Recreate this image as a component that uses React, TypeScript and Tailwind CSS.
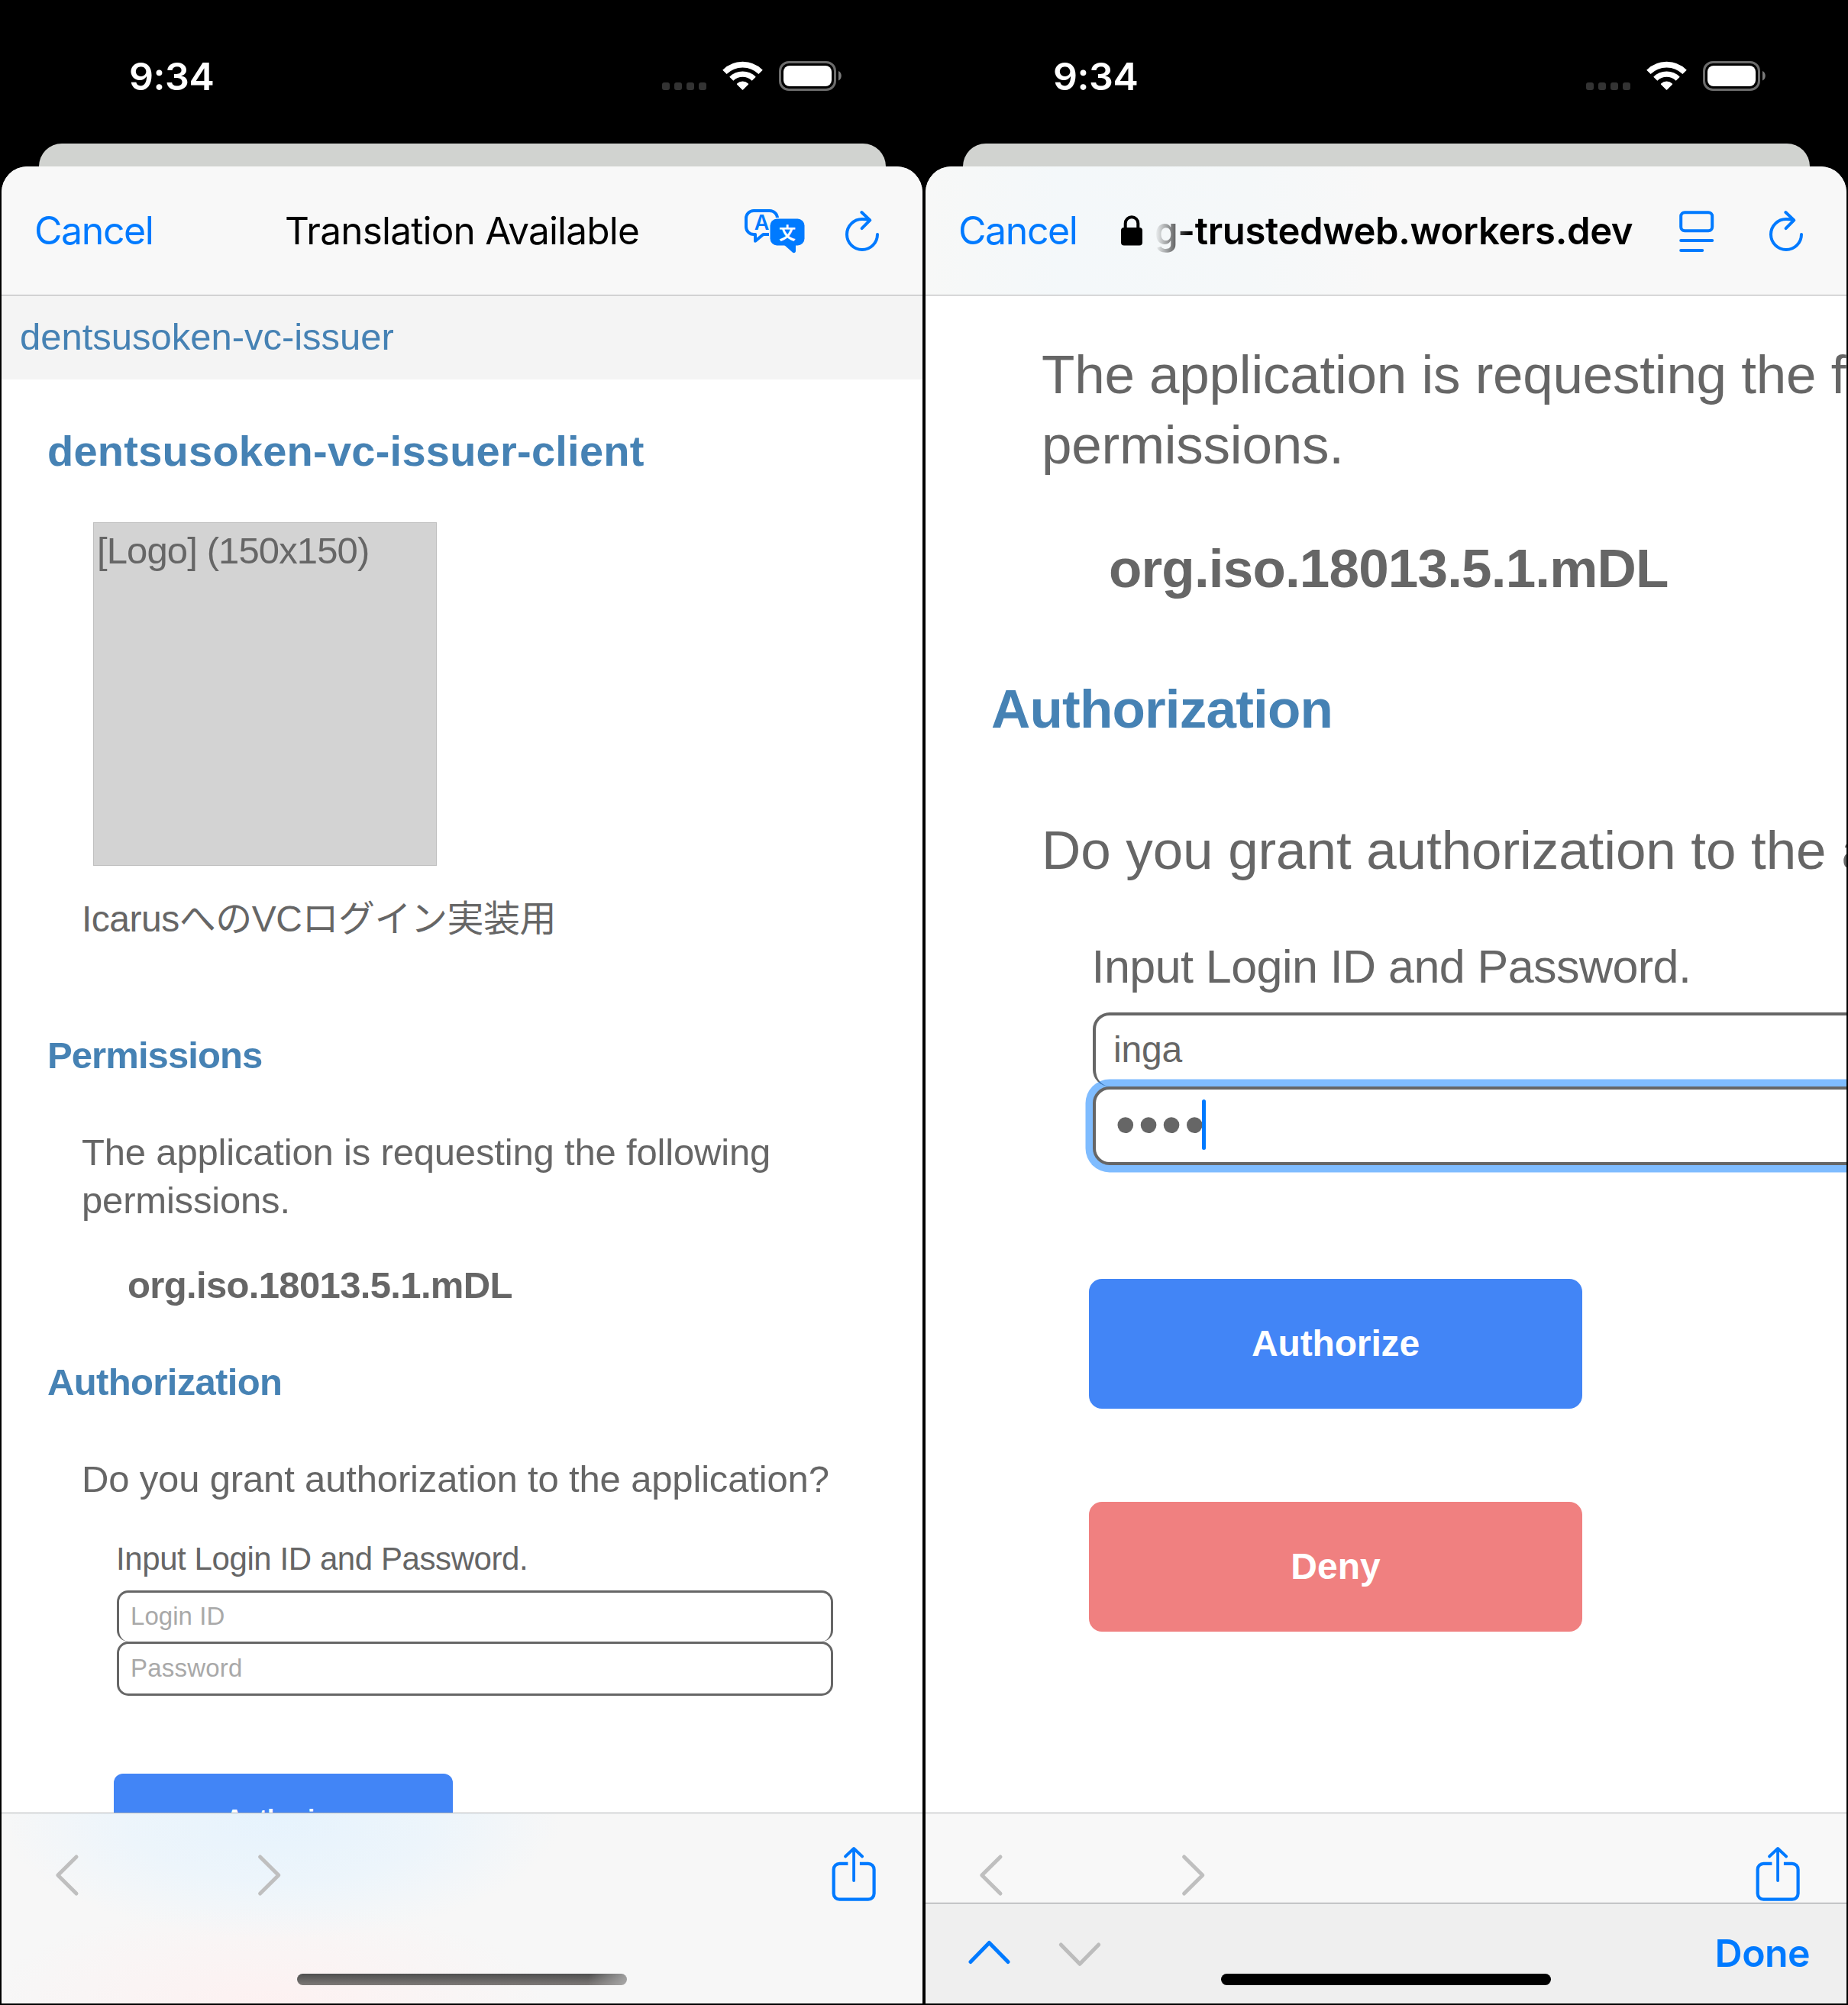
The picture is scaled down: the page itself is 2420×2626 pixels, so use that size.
import type { ReactNode } from "react";

function StatusBar() {
  return (
    <div className="flex h-[188px] shrink-0 items-start pt-[70px] pr-[104px] pl-[167px] font-[Inter,sans-serif] text-white">
      <span className="text-[50px] leading-[60px] font-semibold tracking-[-0.41px]">9:34</span>
      <div className="ml-auto flex items-start">
        <div className="mt-[38px] flex gap-[6px]">
          <span className="size-[10px] rounded-[3px] bg-[#333]" />
          <span className="size-[10px] rounded-[3px] bg-[#333]" />
          <span className="size-[10px] rounded-[3px] bg-[#333]" />
          <span className="size-[10px] rounded-[3px] bg-[#333]" />
        </div>
        <svg className="mt-[10px] ml-[21px]" width="53" height="40" viewBox="0 0 53 40" fill="none">
          <path d="M2.9 14.4a33.4 33.4 0 0 1 47.2 0" stroke="#fff" strokeWidth="7.6" />
          <path d="M11.8 23.3a20.8 20.8 0 0 1 29.4 0" stroke="#fff" strokeWidth="7.2" />
          <path
            d="M26.5 37l-6.8-6.9a9.6 9.6 0 0 1 13.6 0z"
            fill="#fff"
            stroke="#fff"
            strokeWidth="1.6"
            strokeLinejoin="round"
          />
        </svg>
        <svg className="mt-[10px] ml-[21px]" width="84" height="40" viewBox="0 0 84 40" fill="none">
          <rect x="1.5" y="1.5" width="72" height="36" rx="11.5" stroke="#6c6c6c" strokeWidth="3" />
          <rect x="6" y="6" width="63" height="27" rx="8" fill="#fff" />
          <path d="M78 13c5 2 5 10.500 0 12.500z" fill="#7a7a7a" />
        </svg>
      </div>
    </div>
  );
}

function ReloadIcon() {
  return (
    <svg width="48" height="60" viewBox="0 0 48 60" fill="none" stroke="#007aff" strokeWidth="4">
      <path d="M44 35a20 20 0 1 1-20-20c3 0 6 .3 9 1" strokeLinecap="round" />
      <path d="M23.300 6l11 10.400-10.700 10.700" strokeLinecap="round" strokeLinejoin="round" />
    </svg>
  );
}

function TranslateIcon() {
  return (
    <svg className="mr-[51px]" width="80" height="60" viewBox="974 272 80 60" fill="none">
      <path
        d="M1018 292v-6a10 10 0 0 0-10-10h-21a10 10 0 0 0-10 10v11a10 10 0 0 0 10 10h2v8.800l10.500-8.800h18"
        stroke="#007aff"
        strokeWidth="4"
        strokeLinejoin="round"
      />
      <text
        x="997.5"
        y="301"
        textAnchor="middle"
        className="fill-[#007aff] font-[Inter,sans-serif] text-[27px] font-semibold"
      >
        A
      </text>
      <rect x="1007" y="285" width="48" height="38" rx="10" fill="#f7f7f7" />
      <rect x="1008.500" y="286.500" width="45" height="35" rx="9" fill="#007aff" />
      <path d="M1026 320l11.500 10.300c2 1.600 4.500.8 4.500-1.600V320z" fill="#007aff" />
      <text
        x="1031"
        y="312.500"
        textAnchor="middle"
        className="fill-white font-['Noto_Sans_CJK_JP',sans-serif] text-[22px] font-bold"
      >
        文
      </text>
    </svg>
  );
}

function ReaderIcon() {
  return (
    <svg
      className="mr-[70px]"
      width="47"
      height="60"
      viewBox="0 0 47 60"
      fill="none"
      stroke="#007aff"
      strokeWidth="4"
      strokeLinecap="round"
    >
      <rect x="3.200" y="6.300" width="41" height="24" rx="5" />
      <path d="M3.200 43h41M3.200 56h28" />
    </svg>
  );
}

function LockIcon() {
  return (
    <svg width="28" height="40" viewBox="0 0 28 40" fill="none">
      <rect x="0" y="16" width="28" height="23.500" rx="4" fill="#000" />
      <path d="M5.700 18v-7.500a8.300 8.300 0 0 1 16.600 0V18" stroke="#000" strokeWidth="4" />
    </svg>
  );
}

function NavIcons() {
  return (
    <div className="flex h-[162px] items-center pr-[59px] pl-[69px]">
      <svg width="34" height="60" viewBox="0 0 34 60" fill="none">
        <path d="M29 6L4.800 30 29 54" stroke="#bfbfbf" strokeWidth="5" strokeLinecap="round" strokeLinejoin="round" />
      </svg>
      <svg className="ml-[231px]" width="34" height="60" viewBox="0 0 34 60" fill="none">
        <path d="M4.600 6l24.200 24L4.600 54" stroke="#bfbfbf" strokeWidth="5" strokeLinecap="round" strokeLinejoin="round" />
      </svg>
      <svg
        className="ml-auto"
        width="62"
        height="80"
        viewBox="1087 2416 62 80"
        fill="none"
        stroke="#007aff"
        strokeWidth="4.200"
      >
        <path d="M1110.400 2440.800h-11a7.700 7.700 0 0 0-7.700 7.700v31.500a7.700 7.700 0 0 0 7.700 7.700h37.500a7.700 7.700 0 0 0 7.700-7.700v-31.500a7.700 7.700 0 0 0-7.700-7.700h-11" />
        <path
          d="M1118.100 2463v-41.500M1107 2431.500l11.100-10.500 11.100 10.500"
          strokeWidth="3.800"
          strokeLinecap="round"
          strokeLinejoin="round"
        />
      </svg>
    </div>
  );
}

function Phone({ header, children, home }: { header: ReactNode; children: ReactNode; home: ReactNode }) {
  return (
    <div className="relative flex h-[2626px] w-[1210px] flex-col overflow-hidden bg-black px-[2px] pb-[2px]">
      <StatusBar />
      <div className="mx-[48.5px] h-[30px] shrink-0 rounded-t-[30px] bg-[#d1d3d0]" />
      <div className="flex min-h-0 flex-1 flex-col overflow-hidden rounded-t-[34px] bg-white font-['Liberation_Sans',sans-serif] text-[#666]">
        {header}
        {children}
      </div>
      {home}
    </div>
  );
}

function IssuerScreen() {
  return (
    <Phone
      header={
        <header className="flex h-[169px] shrink-0 items-center border-b border-[#adadaf] bg-[#f8f8f8] pr-[55px] pl-[43px] font-[Inter,sans-serif] leading-[169px]">
          <span className="w-[328px] text-[50px] tracking-[-1.4px] text-[#007aff]">Cancel</span>
          <span className="text-[49.5px] tracking-[-0.8px] whitespace-nowrap text-black">Translation Available</span>
          <div className="ml-auto flex items-center">
            <TranslateIcon />
            <ReloadIcon />
          </div>
        </header>
      }
      home={
        <div className="absolute bottom-[26px] left-[389px] h-[15px] w-[432px] rounded-full bg-[linear-gradient(100deg,transparent_88%,#b5b5b5cc_100%),linear-gradient(#4e4e4e,#7d7977)]" />
      }
    >
      <main className="flex min-h-0 flex-1 flex-col items-start overflow-hidden whitespace-nowrap">
        <div className="h-[110px] w-full shrink-0 bg-[#f4f4f4] pl-[24px] text-[49px] leading-[108px] tracking-[-0.02px] text-[#4682b4]">
          dentsusoken-vc-issuer
        </div>
        <h1 className="mt-[54px] ml-[60px] text-[56px] leading-[80px] font-bold tracking-[0.24px] text-[#4682b4]">
          dentsusoken-vc-issuer-client
        </h1>
        <div className="mt-[53px] ml-[120px] size-[450px] shrink-0 border border-[#bfbfbf] bg-[#d3d3d3] pt-[5px] pl-[4px] text-[49px] leading-[62px] tracking-[-0.88px]">
          [Logo] (150x150)
        </div>
        <p className="mt-[39px] ml-[105px] font-['Liberation_Sans','Noto_Sans_CJK_JP',sans-serif] text-[48px] leading-[62px] tracking-[-0.5px]">
          IcarusへのVCログイン実装用
        </p>
        <h2 className="mt-[116px] ml-[60px] text-[49px] leading-[62px] font-bold tracking-[-0.92px] text-[#4682b4]">
          Permissions
        </h2>
        <p className="mt-[65px] ml-[105px] text-[49px] leading-[63px] tracking-[-0.18px]">
          The application is requesting the following
          <br />
          permissions.
        </p>
        <p className="mt-[48px] ml-[165px] text-[49px] leading-[62px] font-bold tracking-[-0.65px]">
          org.iso.18013.5.1.mDL
        </p>
        <h2 className="mt-[65px] ml-[60px] text-[49px] leading-[62px] font-bold tracking-[-0.65px] text-[#4682b4]">
          Authorization
        </h2>
        <p className="mt-[65px] ml-[105px] text-[49px] leading-[62px] tracking-[-0.16px]">
          Do you grant authorization to the application?
        </p>
        <p className="mt-[48px] ml-[150px] text-[42px] leading-[52px] tracking-[-0.42px]">
          Input Login ID and Password.
        </p>
        <div className="mt-[15px] ml-[151px] h-[67px] w-[938px] shrink-0 rounded-[15px] border-[3px] border-b-0 border-[#666] bg-white pl-[15px] text-[33px] leading-[61px] tracking-[0.05px] text-[#a9a9a9]">
          Login ID
        </div>
        <div className="ml-[151px] h-[71px] w-[938px] shrink-0 rounded-[15px] border-[3px] border-[#666] bg-white pl-[15px] text-[33px] leading-[63px] tracking-[0.2px] text-[#a9a9a9]">
          Password
        </div>
        <div className="mt-[102px] ml-[147px] h-[117px] w-[444px] shrink-0 rounded-[12px] bg-[#4285f6] text-center text-[33px] leading-[117px] font-bold tracking-[-0.1px] text-white">
          Authorize
        </div>
      </main>
      <footer className="h-[250px] shrink-0 border-t border-[#b0b2b5] bg-[#f7f7f7] bg-[radial-gradient(ellipse_370px_165px_at_365px_0px,#e6f3fd,#e8f4fdb0_55%,#e6f3fd00),radial-gradient(ellipse_370px_130px_at_350px_250px,#fdf1f1,#fdf1f100)]">
        <NavIcons />
      </footer>
    </Phone>
  );
}

function SignInScreen() {
  return (
    <Phone
      header={
        <header className="flex h-[169px] shrink-0 items-center border-b border-[#adadaf] bg-[linear-gradient(90deg,#f7f8f7,#f4f8fa_15%,#f5f8f9_35%,#f8f8f8_50%)] pr-[55px] pl-[43px] font-[Inter,sans-serif] leading-[169px]">
          <span className="w-[213px] text-[50px] tracking-[-1.4px] text-[#007aff]">Cancel</span>
          <LockIcon />
          <span className="ml-[16px] [mask-image:linear-gradient(90deg,transparent,#000_46px)] text-[49px] font-semibold tracking-[-0.35px] whitespace-nowrap text-black">
            g-trustedweb.workers.dev
          </span>
          <div className="ml-auto flex items-center">
            <ReaderIcon />
            <ReloadIcon />
          </div>
        </header>
      }
      home={<div className="absolute bottom-[26px] left-[389px] h-[15px] w-[432px] rounded-full bg-black" />}
    >
      <main className="flex min-h-0 flex-1 flex-col items-start overflow-hidden whitespace-nowrap">
        <p className="mt-[58px] ml-[152px] text-[71px] leading-[92px] tracking-[-0.24px]">
          The application is requesting the following
          <br />
          permissions.
        </p>
        <p className="mt-[70px] ml-[240px] text-[71px] leading-[92px] font-bold tracking-[-0.82px]">
          org.iso.18013.5.1.mDL
        </p>
        <h2 className="mt-[92px] ml-[86px] text-[71px] leading-[92px] font-bold tracking-[-0.8px] text-[#4682b4]">
          Authorization
        </h2>
        <p className="mt-[93px] ml-[152px] text-[71px] leading-[92px] tracking-[-0.08px]">
          Do you grant authorization to the application?
        </p>
        <p className="mt-[66px] ml-[217.5px] text-[61px] leading-[80px] tracking-[-0.55px]">
          Input Login ID and Password.
        </p>
        <div className="mt-[20px] ml-[219px] h-[97px] w-[1366px] shrink-0 rounded-[22px] border-4 border-b-0 border-[#666] bg-white pl-[23px] text-[48px] leading-[90px] tracking-[-0.2px]">
          inga
        </div>
        <div className="ml-[219px] flex h-[103px] w-[1366px] shrink-0 items-center rounded-[22px] border-4 border-[#666] bg-white pb-[3px] pl-[25.5px] shadow-[0_0_0_9.5px_rgba(0,122,255,0.5)]">
          <span className="text-[76px] leading-[92px] tracking-[3.56px]">••••</span>
          <span className="-ml-[7px] h-[66px] w-[5px] rounded-full bg-[#007aff]" />
        </div>
        <div className="mt-[149px] ml-[214px] h-[170px] w-[646px] shrink-0 rounded-[17px] bg-[#4285f6] text-center text-[48px] leading-[169px] font-bold tracking-[-0.15px] text-white">
          Authorize
        </div>
        <div className="mt-[122px] ml-[214px] h-[170px] w-[646px] shrink-0 rounded-[17px] bg-[#f08080] text-center text-[48px] leading-[169px] font-bold text-white">
          Deny
        </div>
      </main>
      <footer className="h-[118px] shrink-0 overflow-hidden border-t border-[#b0b2b5] bg-[#f8f8f8]">
        <NavIcons />
      </footer>
      <div className="flex h-[132px] shrink-0 items-start border-t border-[#8e8f94] bg-[#efefef] pr-[48px] pl-[54px]">
        <svg className="mt-[43px]" width="60" height="44" viewBox="1266 2536 60 44" fill="none">
          <path d="M1271 2569.500l24.400-25 24.600 25" stroke="#007aff" strokeWidth="5" strokeLinecap="round" strokeLinejoin="round" />
        </svg>
        <svg className="mt-[43px] ml-[58px]" width="60" height="44" viewBox="1384 2536 60 44" fill="none">
          <path d="M1389.300 2547l24.700 25.300 24.700-25.300" stroke="#bcbcbc" strokeWidth="5" strokeLinecap="round" strokeLinejoin="round" />
        </svg>
        <span className="ml-auto font-[Inter,sans-serif] text-[50px] leading-[130px] font-semibold tracking-[-0.58px] text-[#007aff]">
          Done
        </span>
      </div>
    </Phone>
  );
}

export default function App() {
  return (
    <div className="flex w-[2420px] bg-black">
      <IssuerScreen />
      <SignInScreen />
    </div>
  );
}
